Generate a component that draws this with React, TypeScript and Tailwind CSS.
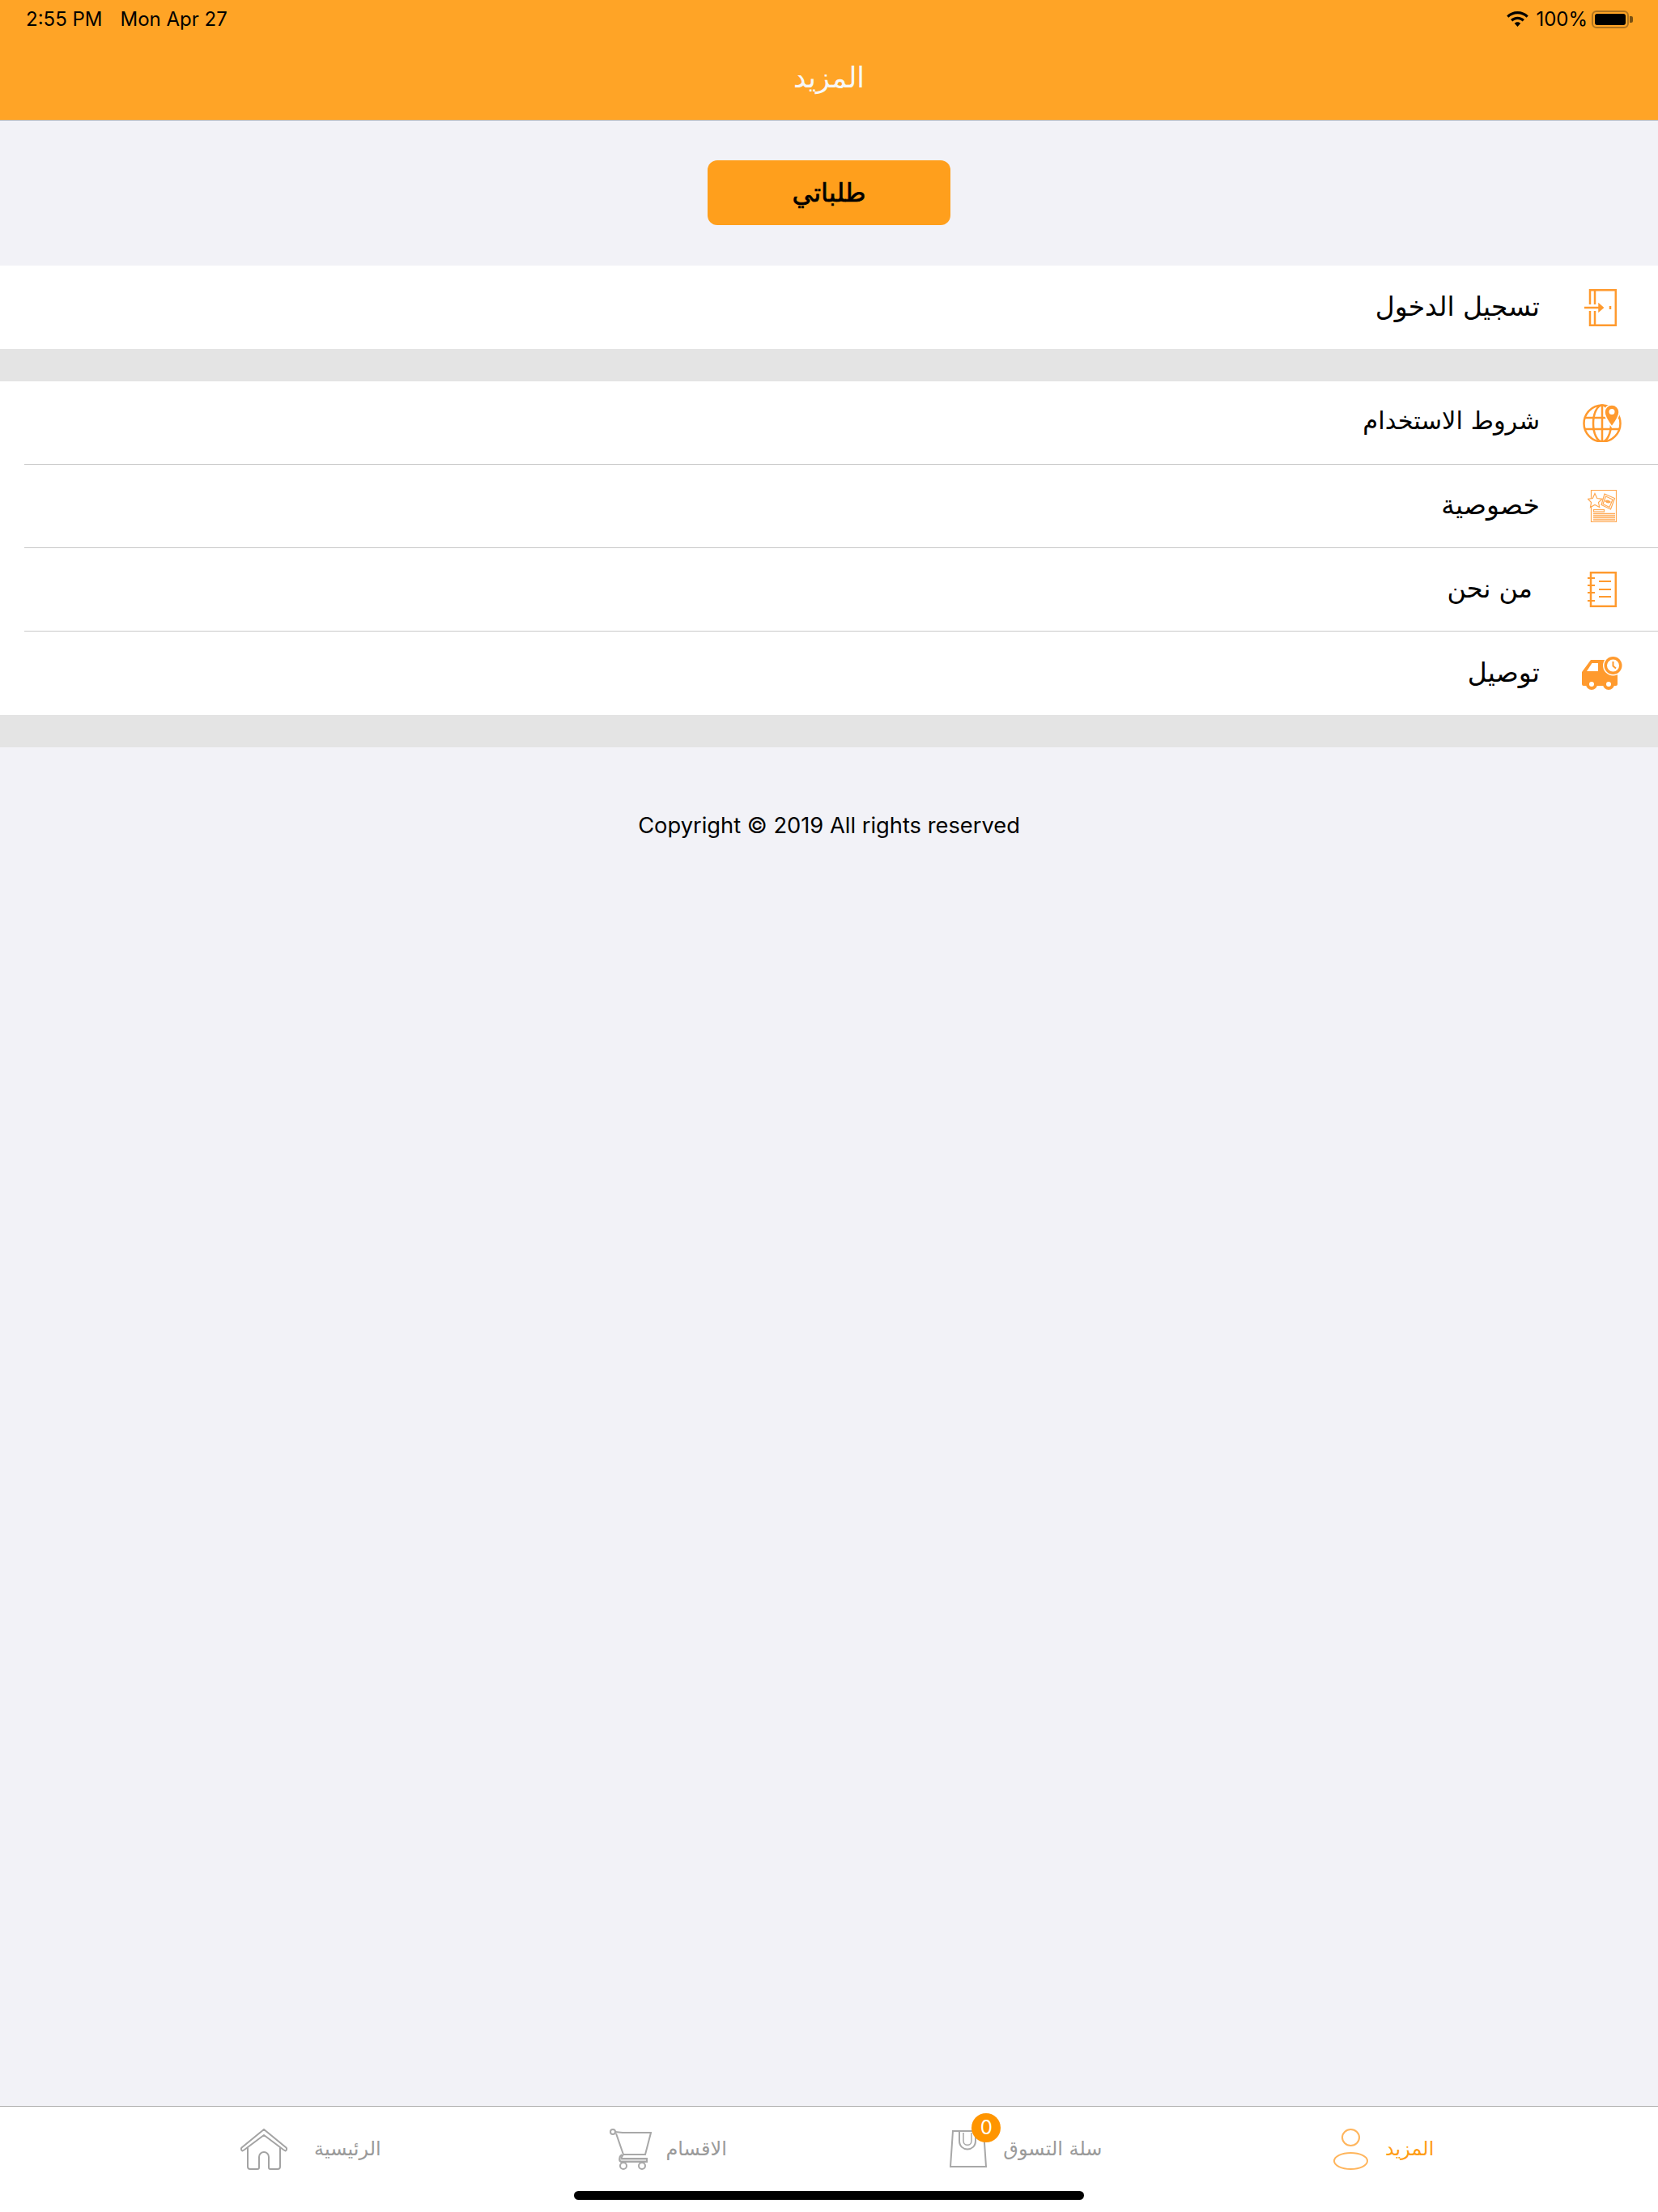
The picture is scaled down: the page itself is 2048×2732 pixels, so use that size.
const arabic = "font-['DejaVu_Sans','Noto_Sans',sans-serif]";

function DoorIcon() {
  return (
    <svg width="40" height="46" viewBox="0 0 40 46" fill="none" stroke="#ff9a2e" strokeWidth="2.500">
      <path d="M7 19V1.200h31.800v43.600H7V27" />
      <path d="M13 19V1M13 27v18" />
      <path d="M0 23h21" />
      <path d="M18.500 19.500 22.500 23l-4 3.500z" fill="#ff9a2e" />
      <path d="M32 21v4" />
    </svg>
  );
}

function GlobeIcon() {
  return (
    <svg width="48" height="47" viewBox="0 0 48 47" fill="none" stroke="#ff9a2e" strokeWidth="2.500">
      <circle cx="24" cy="24" r="22.500" />
      <ellipse cx="24" cy="24" rx="11" ry="22.500" />
      <path d="M24 1.500v45M2 17h44M2 31h44" />
      <path d="M36 28C31 21 27 16 27 10a9 9 0 0 1 18 0c0 6-4 11-9 18z" fill="#ff9a2e" stroke="#fff" strokeWidth="1.500" />
      <circle cx="36" cy="9.500" r="3.500" fill="#fff" stroke="none" />
    </svg>
  );
}

function PrivacyIcon() {
  return (
    <svg width="36" height="40" viewBox="0 0 36 40" fill="none" stroke="#ffa851" strokeWidth="1.200">
      <rect x="4.500" y="0.500" width="31" height="39" />
      <path d="M9 4.500 11.800 10.500 18 11.300 13.500 15.500 14.700 21.500 9 18.500 3.500 21.500 4.600 15.500 0.500 11.300 6.300 10.500z" fill="#fff" />
      <path d="M21 5 33.500 10.500 28.500 24 17 18.500z" fill="#fff" />
      <path d="M22.500 8 31 12 27 21.500 19 17.500z" />
      <path d="M22 14c2-1.500 4-1 6 1-2 1.500-4 1-6-1z" fill="#ffa851" />
      <rect x="7.500" y="24.500" width="13" height="2.500" />
      <path d="M7 29.500h27M7 32h27M7 34.500h27M7 37h27" strokeWidth="1.300" />
    </svg>
  );
}

function NotebookIcon() {
  return (
    <svg width="36" height="44" viewBox="0 0 36 44" fill="none" stroke="#ff9a2e" strokeWidth="2.500">
      <rect x="4" y="1.200" width="30.800" height="41.600" />
      <path d="M0 8h9M0 17h9M0 26h9M0 36h9" strokeWidth="2" />
      <path d="M14 12h15M14 22h15M14 31h15" strokeWidth="2" />
    </svg>
  );
}

function TruckIcon() {
  return (
    <svg width="50" height="41" viewBox="0 0 50 41">
      <path d="M11 4h17a2 2 0 0 1 2 2v11h14v17a2 2 0 0 1-2 2H2a2 2 0 0 1-2-2V19z" fill="#ff9a2e" />
      <path d="M12.500 8H20v10H6z" fill="#fff" />
      <circle cx="12" cy="34" r="7" fill="#ff9a2e" />
      <circle cx="12" cy="34" r="3" fill="#fff" />
      <circle cx="33" cy="34" r="7" fill="#ff9a2e" />
      <circle cx="33" cy="34" r="3" fill="#fff" />
      <circle cx="38.500" cy="11" r="12.500" fill="#fff" />
      <circle cx="38.500" cy="11" r="11" fill="#ff9a2e" />
      <circle cx="38.500" cy="11" r="7.500" fill="#fff" />
      <path d="M38.500 6v5.500l3.500 3" fill="none" stroke="#ff9a2e" strokeWidth="2" />
    </svg>
  );
}

function HomeIcon() {
  return (
    <svg width="58" height="51" viewBox="0 0 58 51" fill="none" stroke="#a3a3a3" strokeWidth="2" strokeLinejoin="round" strokeLinecap="round">
      <path d="M9 24v23a3 3 0 0 0 3 3h9a2 2 0 0 0 2-2V35a6 6 0 0 1 12 0v13a2 2 0 0 0 2 2h9a3 3 0 0 0 3-3V24" />
      <path d="M1.500 23.500 29 1l27.500 22.500a2.500 2.500 0 0 1-1 4L53 26 29 8 5 26l-2.500 1.500a2.500 2.500 0 0 1-1-4z" />
    </svg>
  );
}

function CartIcon() {
  return (
    <svg width="52" height="51" viewBox="0 0 52 51" fill="none" stroke="#a8a8a8" strokeWidth="2">
      <circle cx="4" cy="4" r="3" />
      <path d="M7 4 16 5h35l-7 27H17L8 6" />
      <path d="M17 32c-2 3-3 4-2 5h31v4H14c-3-1-2-7 1-9" fill="#d9d9d9" />
      <circle cx="17" cy="46" r="4" />
      <circle cx="40" cy="46" r="4" />
    </svg>
  );
}

function BagIcon() {
  return (
    <svg width="46" height="46" viewBox="0 0 46 46" fill="none" stroke="#a8a8a8" strokeWidth="2">
      <path d="M4 1h38l3 44H1z" />
      <path d="M12 1v12c0 14 20 14 20 0V1" />
      <path d="M17 3v10c0 7 10 7 10 0V3" strokeWidth="1.500" />
    </svg>
  );
}

function PersonIcon() {
  return (
    <svg width="43" height="51" viewBox="0 0 43 51" fill="none" stroke="#ffb55c" strokeWidth="2">
      <ellipse cx="21.500" cy="11" rx="10.500" ry="10" />
      <ellipse cx="21.500" cy="40" rx="20.500" ry="10" />
    </svg>
  );
}

function WifiIcon() {
  return (
    <svg width="27" height="20" viewBox="0 0 27 20">
      <path d="M13.500 0C8.300 0 3.700 2 .2 5.400l2.200 2.300c2.900-2.800 6.800-4.500 11.100-4.500s8.200 1.700 11.100 4.500l2.200-2.300C23.300 2 18.700 0 13.500 0z" />
      <path d="M13.500 6.700c-3.300 0-6.300 1.300-8.500 3.400l2.300 2.300c1.600-1.500 3.800-2.500 6.200-2.500s4.600 1 6.200 2.500l2.300-2.300c-2.200-2.100-5.200-3.400-8.500-3.400z" />
      <path d="M13.500 13.300c-1.500 0-2.800.6-3.800 1.500l3.800 4.200 3.800-4.200c-1-.9-2.300-1.500-3.800-1.500z" />
    </svg>
  );
}

function Row({ label, icon, size = 'text-[33px]', pad = '', line = false }: { label: string; icon: React.ReactNode; size?: string; pad?: string; line?: boolean }) {
  return (
    <div className="bg-white pl-[30px]">
      <div className={`flex h-[103px] items-center justify-end ${line ? 'border-b border-[#c8c8c8]' : ''}`}>
        <span className={`${arabic} ${size} mb-[3px] leading-none text-black ${pad}`} dir="rtl">
          {label}
        </span>
        <div className="flex w-[146px] shrink-0 items-center justify-center pl-[8px]">{icon}</div>
      </div>
    </div>
  );
}

function Tab({ label, icon, gap, active = false }: { label: string; icon: React.ReactNode; gap: string; active?: boolean }) {
  return (
    <div className={`flex items-center justify-center ${gap}`}>
      {icon}
      <span className={`${arabic} text-[24px] leading-none ${active ? 'text-[#ff9d14]' : 'text-[#9a9a9a]'}`} dir="rtl">
        {label}
      </span>
    </div>
  );
}

export default function App() {
  return (
    <div className="flex min-h-[2732px] flex-col bg-[#f2f2f7] font-['Inter',sans-serif] text-black">
      <header className="flex h-[149px] flex-col border-b border-[#b5b5b5] bg-[#ffa426]">
        <div className="flex h-[48px] items-center justify-between pr-[31px] pl-[32px] text-[24px] leading-none">
          <div className="flex gap-[22px]">
            <span>2:55 PM</span>
            <span>Mon Apr 27</span>
          </div>
          <div className="flex items-center">
            <WifiIcon />
            <span className="ml-[9px]">100%</span>
            <div className="ml-[5px] flex h-[22px] w-[46px] rounded-[6px] border-2 border-[#b0741f] p-[2px]">
              <div className="flex-1 rounded-[3px] bg-black" />
            </div>
            <div className="ml-[1px] h-[8px] w-[4px] rounded-r-[2px] bg-[#7a5012]" />
          </div>
        </div>
        <h1 className={`${arabic} mt-[31px] text-center text-[35px] leading-none font-normal text-[#f7f7f7]`}>المزيد</h1>
      </header>

      <main className="flex-1">
        <div className="flex justify-center pt-[49px] pb-[50px]">
          <button className={`${arabic} h-[80px] w-[300px] rounded-[12px] bg-[#ff9f1c] text-[32px] text-black [-webkit-text-stroke:0.7px_black]`}>طلباتي</button>
        </div>

        <Row label="تسجيل الدخول" icon={<div className="mr-[4px]"><DoorIcon /></div>} />
        <div className="h-[40px] bg-[#e4e4e4]" />
        <Row label="شروط الاستخدام" size="text-[30.500px]" icon={<GlobeIcon />} line />
        <Row label="خصوصية" icon={<PrivacyIcon />} line />
        <Row label="من نحن" size="text-[32px]" icon={<NotebookIcon />} pad="pr-[9px]" line />
        <Row label="توصيل" icon={<TruckIcon />} />
        <div className="h-[40px] bg-[#e4e4e4]" />

        <p className="mt-[82px] text-center text-[27.300px] leading-[30px]">Copyright © 2019 All rights reserved</p>
      </main>

      <footer className="flex h-[131px] flex-col border-t border-[#b0b0b0] bg-white">
        <div className="grid h-[104px] grid-cols-4 pr-[118px] pl-[163px]">
          <Tab label="الرئيسية" icon={<HomeIcon />} gap="gap-[33px]" />
          <Tab label="الاقسام" icon={<CartIcon />} gap="gap-[17px]" />
          <Tab
            label="سلة التسوق"
            gap="gap-[20px]"
            icon={
              <div className="relative">
                <BagIcon />
                <span className="absolute -top-[21px] left-[27px] flex h-[36px] w-[36px] items-center justify-center rounded-full bg-[#ff9500] text-[24px] leading-none text-white">
                  0
                </span>
              </div>
            }
          />
          <Tab label="المزيد" icon={<PersonIcon />} gap="gap-[21px]" active />
        </div>
        <div className="mx-auto h-[11px] w-[630px] rounded-full bg-black" />
      </footer>
    </div>
  );
}
